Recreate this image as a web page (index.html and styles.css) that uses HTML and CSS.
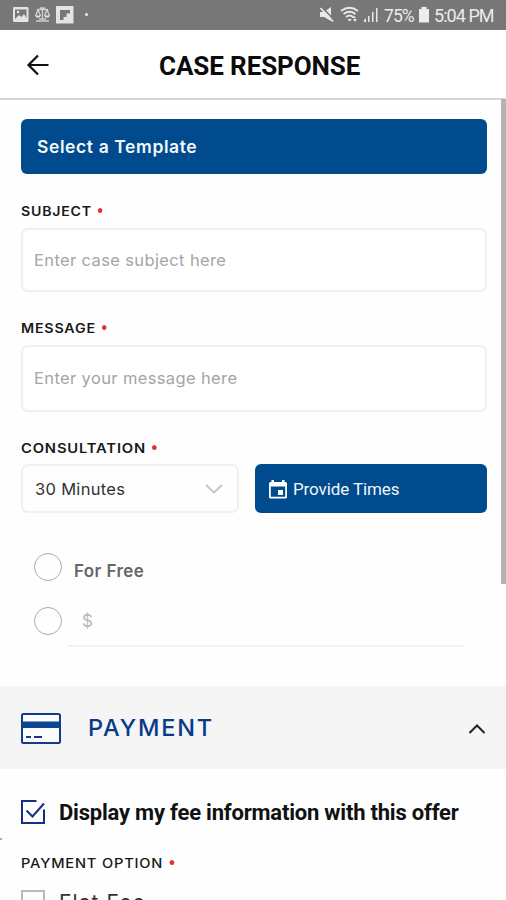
FILE: index.html
```html
<!DOCTYPE html>
<html lang="en">
<head>
<meta charset="utf-8">
<meta name="viewport" content="width=device-width">
<title>Case Response</title>
<link rel="stylesheet" href="styles.css">
</head>
<body>
<div class="screen">
  <div class="status">
    <svg class="status-left" width="90" height="30" viewBox="0 0 90 30" fill="#e4e4e4">
      <path fill-rule="evenodd" d="M14 7H27.500Q28.500 7 28.500 8V21Q28.500 22 27.500 22H14Q13 22 13 21V8Q13 7 14 7ZM15 9.500V19L19 15L21.500 17L24 14L26.500 18V9.500Z"/>
      <circle cx="18" cy="12" r="1.300"/>
      <path d="M42.500 8V19M37 9.500H48M38 9.500L35.500 16M38 9.500L40.500 16M47 9.500L44.500 16M47 9.500L49.500 16M40 8H45M36 21H49M39 19H46" fill="none" stroke="#d0d0d0" stroke-width="1.300"/>
      <path d="M35 15.500H41L39.500 17.500H36.500ZM44 15.500H50L48.500 17.500H45.500Z"/>
      <path fill-rule="evenodd" d="M56 6H73.500V23.500H56ZM60 10V20H63.500V17H66.500V13.500H70V10Z"/>
      <circle cx="86.500" cy="14.500" r="1.600"/>
    </svg>
    <div class="status-right">
      <svg width="62" height="30" viewBox="0 0 62 30" fill="#e8e8e8">
        <path d="M1 12H5L12 7V21L5 17H1Z"/>
        <path d="M3 7L15.500 20.500" stroke="#777" stroke-width="1.600"/>
        <path d="M1.500 8L14 21.500" stroke="#e8e8e8" stroke-width="1.800"/>
        <g fill="none" stroke="#e8e8e8" stroke-width="1.800"><path d="M22 11Q30.500 4.500 39 11M24.500 14Q30.500 9.500 36.500 14M27 17Q30.500 14 34 17"/></g>
        <path d="M28.500 19L30.500 21.500L33 19ZM33 18L35 15.500L37 18ZM34 19H38L36 22Z"/>
        <path d="M45 22V20L47 18V22ZM49 22V16H50.500V22ZM53 22V12H54.500V22ZM57 22V8H58.500V22Z"/>
      </svg>
      <span class="battery-text">75%</span>
      <svg width="12" height="30" viewBox="0 0 12 30"><path d="M3.500 7H8.500V9H11V22.500H1V9H3.500Z" fill="#eee"/></svg>
      <span class="clock">5:04 PM</span>
    </div>
  </div>
  <header class="header">
    <svg class="back" width="24" height="24" viewBox="0 0 24 24"><path d="M22.500 12H2.500M12 2.500L2.500 12L12 21.500" fill="none" stroke="#111" stroke-width="2.200"/></svg>
    <h1 class="title">CASE RESPONSE</h1>
  </header>
  <main class="form">
    <button class="template"><span>Select a Template</span></button>
    <div class="label subject-label"><span>SUBJECT</span><i></i></div>
    <div class="input subject"><span>Enter case subject here</span></div>
    <div class="label message-label"><span>MESSAGE</span><i></i></div>
    <div class="input message"><span>Enter your message here</span></div>
    <div class="label consult-label"><span>CONSULTATION</span><i></i></div>
    <div class="consult">
      <div class="select"><span>30 Minutes</span>
        <svg width="20" height="12" viewBox="0 0 20 12"><path d="M2 2L10 9.500L18 2" fill="none" stroke="#c4c4c4" stroke-width="1.800"/></svg>
      </div>
      <button class="times">
        <svg width="20" height="20" viewBox="0 0 20 20"><path fill-rule="evenodd" fill="#fff" d="M3.500 1H6V3H14V1H16.500V3H17.500Q19 3 19 4.500V18Q19 19.500 17.500 19.500H2.500Q1 19.500 1 18V4.500Q1 3 2.500 3H3.500ZM2.800 7.500V17.700H17.200V7.500ZM10 11H15V16H10Z"/></svg>
        <span>Provide Times</span>
      </button>
    </div>
    <div class="radio free"><b></b><span>For Free</span></div>
    <div class="radio fee"><b></b><div class="amount"><span>$</span></div></div>
  </main>
  <section class="payment">
    <svg width="42" height="34" viewBox="0 0 42 34"><rect x="2" y="2" width="38" height="29" rx="1.500" fill="#fbfbfd" stroke="#143a8a" stroke-width="2"/><path d="M2 9.500H40V16H2Z" fill="#0b4590"/><path d="M6 25H11M14 25H22" stroke="#143a8a" stroke-width="2"/></svg>
    <h2>PAYMENT</h2>
    <svg class="up" width="18" height="12" viewBox="0 0 18 12"><path d="M1.500 10L9 2.500L16.500 10" fill="none" stroke="#222" stroke-width="2"/></svg>
  </section>
  <section class="options">
    <div class="display">
      <svg width="26" height="26" viewBox="0 0 26 26" fill="none" stroke="#152f86" stroke-width="2"><path d="M16.500 2H2V24H24V10.500M6.500 11.500L12.500 17.500L24 4.500"/></svg>
      <span>Display my fee information with this offer</span>
    </div>
    <hr class="edge-mark">
    <div class="label option-label"><span>PAYMENT OPTION</span><i></i></div>
    <div class="flat"><b></b><span>Flat Fee</span></div>
  </section>
  <div class="scrollbar"></div>
</div>
</body>
</html>
```

FILE: styles.css
```css
* { box-sizing: border-box; }
body { margin: 0; background: #fefefe; font-family: Inter, sans-serif; }
h1, h2 { margin: 0; }
button { border: 0; margin: 0; font-family: inherit; text-align: left; }
svg { display: block; flex: none; }
span { white-space: nowrap; }
.screen { position: relative; width: 506px; height: 900px; overflow: hidden; }
.status { height: 30px; background: #777; display: flex; justify-content: space-between; color: #ececec; font: 18px/32px Roboto, sans-serif; }
.status-right { display: flex; width: 187px; }
.battery-text { width: 35px; margin-left: 3px; margin-right: -2px; font-size: 17.500px; letter-spacing: -0.900px; }
.status-right svg + .clock { margin-left: 4px; letter-spacing: -0.950px; }
.battery-text + svg { margin-left: 1px; }
.header { height: 70px; background: #fff; border-bottom: 2px solid #d6d6d6; display: flex; align-items: center; padding: 1px 0 0 26px; }
.title { margin-left: 109px; font: 700 26px/32px Roboto, sans-serif; letter-spacing: -0.100px; color: #0b0b0b; padding-top: 2px; }
.form { padding: 19px 20px 0 21px; height: 586px; }
.template { display: flex; align-items: center; width: 466px; height: 55px; border-radius: 6px; background: #004b8d; color: #f4f7fb; padding: 0 16px; font-size: 17.500px; font-weight: 600; letter-spacing: 0.600px; }
.label { display: flex; height: 16px; font-size: 12.500px; line-height: 16px; font-weight: 600; color: #191919; letter-spacing: 0.700px; transform-origin: left; }
.label i { width: 4px; height: 5px; border-radius: 50%; background: #d33; margin: 4px 0 0 5px; }
.subject-label { margin-top: 30px; transform: scaleX(1.13); }
.message-label { margin-top: 29px; transform: scaleX(1.14); }
.consult-label { margin-top: 29px; transform: scaleX(1.18); }
.input { display: flex; align-items: center; width: 466px; border: 2px solid #f0f0f0; border-radius: 7px; background: #fff; color: #a5a5a5; font-size: 16.500px; letter-spacing: 0.370px; padding: 0 0 1px 11px; }
.subject { height: 64px; margin-top: 8px; }
.message { height: 67px; margin-top: 8px; }
.consult { display: flex; justify-content: space-between; margin-top: 7px; width: 466px; }
.select { display: flex; align-items: center; justify-content: space-between; width: 218px; height: 49px; border: 2px solid #f0f0f0; border-radius: 7px; padding: 0 13px 0 12px; color: #333; font-size: 16.500px; letter-spacing: 0.300px; }
.times { display: flex; align-items: center; gap: 5px; width: 232px; height: 49px; border-radius: 6px; background: #004b8d; color: #f2f6fb; padding: 0 13px; font: 17px Roboto, sans-serif; letter-spacing: -0.100px; }
.radio { display: flex; margin-left: 13px; }
.radio b { width: 28px; height: 28px; border: 1.500px solid #aaa; border-radius: 50%; flex: none; }
.free { margin-top: 40px; height: 54px; }
.free span { margin-left: 12px; margin-top: 7px; font-size: 17px; line-height: 22px; font-weight: 600; color: #666; letter-spacing: 0.400px; }
.amount { width: 396px; height: 40px; margin-left: 6px; border-bottom: 2px solid #f2f2f2; color: #b5b5b5; font-size: 17px; line-height: 29px; padding-left: 14px; }
.payment { height: 83px; background: #f5f5f5; display: flex; align-items: center; padding: 3px 20px 0; }
.payment h2 { font-size: 23.500px; line-height: 28px; font-weight: 500; color: #063b89; margin-left: 26px; letter-spacing: 1.800px; margin-top: -2px; }
.up { margin-left: auto; }
.options { padding: 30px 20px 0; }
.display { display: flex; align-items: center; height: 26px; gap: 13px; font: 700 22px/26px Roboto, sans-serif; letter-spacing: -0.210px; color: #111; }
.display span { padding-top: 2px; }
.edge-mark { width: 2px; height: 2px; border: 0; background: #aaa; margin: 13px 0 0 -20px; }
.option-label { margin: 16px 0 0 1px; font-weight: 500; transform: scaleX(1.17); }
.flat { display: flex; margin-top: 18px; margin-left: 1px; color: #333; font-size: 21px; line-height: 26px; letter-spacing: 1.100px; }
.flat b { width: 24px; height: 24px; border: 2px solid #bbb; }
.flat span { margin-left: 14px; }
.scrollbar { position: absolute; right: 0; top: 99px; width: 5px; height: 485px; background: #b3b3b3; }
```
